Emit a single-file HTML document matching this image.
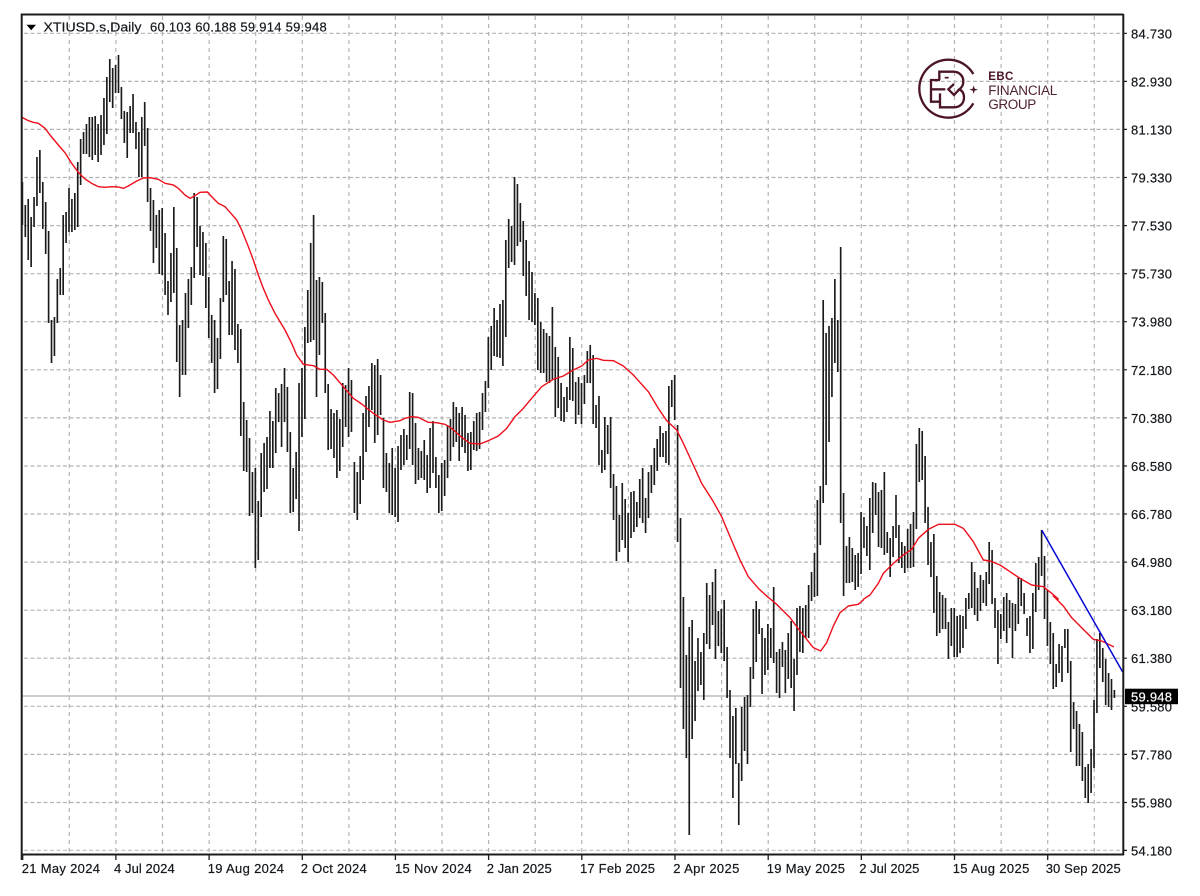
<!DOCTYPE html>
<html lang="en">
<head>
<meta charset="utf-8">
<title>XTIUSD.s,Daily</title>
<style>
html,body{margin:0;padding:0;background:#fff;width:1200px;height:896px;overflow:hidden}
svg{display:block;filter:blur(.3px)}
text{font-family:"Liberation Sans",sans-serif;font-size:13px;fill:#14181c;stroke:#14181c;stroke-width:.2px}
</style>
</head>
<body>
<svg xmlns="http://www.w3.org/2000/svg" width="1200" height="896" viewBox="0 0 1200 896">
<rect width="1200" height="896" fill="#fff"/>
<g stroke="#b4b4b4" stroke-width="1.2" stroke-dasharray="4 2.5" fill="none">
<path d="M24 33.3H1123M24 81.4H1123M24 129.4H1123M24 177.5H1123M24 225.6H1123M24 273.7H1123M24 321.7H1123M24 369.8H1123M24 417.9H1123M24 466H1123M24 514H1123M24 562.1H1123M24 610.2H1123M24 658.2H1123M24 706.3H1123M24 754.4H1123M24 802.5H1123"/>
<path d="M24 850.4H1123" stroke="#c4c4c4"/>
</g>
<g stroke="#b4b4b4" stroke-width="1.2" stroke-dasharray="4 4" fill="none">
<path d="M69.3 16V853M115.9 16V853M162.5 16V853M209.1 16V853M255.7 16V853M302.3 16V853M348.9 16V853M395.4 16V853M442 16V853M488.6 16V853M535.2 16V853M581.8 16V853M628.4 16V853M675 16V853M721.6 16V853M768.2 16V853M814.8 16V853M861.3 16V853M907.9 16V853M954.5 16V853M1001.1 16V853M1047.7 16V853M1094.3 16V853"/>
</g>
<path d="M22 696H1123" stroke="#bcbcbc" stroke-width="1.4" fill="none"/>

<g transform="translate(22.4 0) scale(2.912 1)">
<path fill="none" stroke="#1a1a1a" stroke-width="1.65" vector-effect="non-scaling-stroke" d="M0 182V225M1 205V237M2 199V260M3 217V267M4 197V227M5 157V206M6 150V193M7 182V229M8 202V254M9 231V323M10 320V363M11 317V356M12 279V323M13 268V295M14 215V295M15 212V243M16 188V232M17 199V232M18 193V230M19 162V227M20 139V185M21 132V154M22 124V154M23 117V157M24 117V160M25 116V155M26 124V162M27 115V155M28 98V145M29 77V134M30 59V102M31 68V108M32 65V93M33 55V93M34 87V119M35 111V143M36 112V158M37 106V133M38 94V133M39 122V149M40 132V177M41 117V177M42 102V146M43 128V202M44 188V231M45 200V263M46 215V248M47 210V274M48 208V275M49 233V295M50 281V315M51 253V302M52 207V293M53 248V362M54 325V397M55 320V375M56 293V375M57 279V328M58 267V305M59 193V278M60 197V247M61 226V275M62 232V276M63 243V308M64 277V338M65 315V363M66 320V393M67 338V389M68 298V359M69 236V302M70 239V295M71 281V335M72 261V335M73 269V350M74 324V363M75 329V436M76 402V471M77 420V472M78 438V516M79 472V513M80 468V568M81 501V560M82 453V517M83 443V492M84 437V489M85 411V468M86 421V468M87 388V453M88 393V422M89 384V447M90 368V422M91 387V452M92 432V513M93 468V512M94 452V499M95 383V531M96 368V437M97 327V419M98 290V343M99 243V342M100 215V340M101 280V397M102 277V355M103 282V323M104 313V393M105 384V450M106 409V449M107 413V458M108 410V478M109 419V471M110 383V447M111 385V427M112 368V437M113 380V432M114 462V513M115 472V520M116 456V504M117 413V480M118 396V452M119 386V427M120 363V410M121 365V443M122 359V435M123 375V415M124 418V488M125 453V492M126 463V513M127 448V515M128 468V517M129 446V522M130 435V470M131 429V465M132 435V460M133 392V449M134 393V465M135 423V484M136 448V480M137 451V478M138 440V480M139 455V493M140 428V488M141 421V473M142 457V488M143 475V513M144 463V511M145 460V496M146 425V478M147 419V461M148 402V447M149 407V442M150 413V461M151 407V447M152 415V453M153 433V471M154 432V470M155 421V450M156 413V451M157 412V449M158 393V430M159 381V412M160 337V388M161 326V370M162 308V356M163 320V357M164 304V358M165 300V366M166 240V337M167 219V268M168 226V262M169 177V265M170 184V246M171 203V242M172 221V276M173 240V296M174 261V320M175 272V322M176 293V325M177 298V370M178 322V373M179 329V373M180 333V382M181 336V383M182 307V380M183 347V417M184 357V408M185 383V421M186 397V422M187 387V412M188 337V400M189 348V401M190 382V424M191 377V415M192 383V424M193 375V404M194 351V383M195 345V383M196 355V424M197 405V428M198 396V465M199 450V473M200 417V470M201 425V454M202 417V488M203 474V520M204 486V561M205 515V552M206 483V540M207 499V548M208 513V562M209 492V538M210 491V532M211 502V527M212 479V518M213 468V523M214 498V533M215 472V518M216 465V493M217 448V485M218 439V471M219 426V457M220 433V457M221 431V463M222 386V465M223 380V407M224 375V420M225 425V542M226 518V688M227 597V729M228 655V758M229 627V835M230 620V739M231 661V721M232 638V691M233 652V685M234 633V700M235 583V644M236 595V649M237 582V625M238 569V659M239 611V646M240 609V653M241 600V661M242 647V698M243 690V758M244 716V798M245 708V764M246 763V825M247 707V781M248 697V751M249 695V764M250 667V707M251 609V679M252 601V662M253 609V634M254 628V694M255 638V675M256 624V670M257 628V658M258 587V663M259 652V693M260 649V698M261 642V667M262 650V693M263 633V679M264 621V688M265 659V711M266 608V675M267 606V652M268 608V653M269 605V638M270 585V638M271 572V601M272 553V597M273 500V596M274 486V545M275 300V503M276 333V485M277 326V442M278 318V397M279 279V363M280 320V372M281 247V523M282 493V596M283 546V583M284 537V583M285 548V582M286 555V590M287 553V587M288 512V574M289 517V548M290 526V556M291 498V570M292 482V533M293 483V515M294 492V547M295 490V548M296 472V555M297 532V553M298 538V577M299 526V557M300 495V538M301 525V563M302 542V568M303 546V573M304 529V568M305 524V568M306 512V567M307 444V529M308 428V482M309 431V480M310 456V523M311 507V565M312 542V577M313 534V613M314 576V636M315 592V633M316 595V629M317 598V629M318 622V659M319 608V646M320 608V657M321 616V657M322 615V653M323 616V648M324 598V629M325 593V609M326 562V608M327 572V615M328 588V621M329 575V611M330 580V603M331 572V606M332 542V584M333 550V604M334 598V628M335 610V664M336 614V639M337 597V631M338 593V643M339 600V628M340 603V658M341 604V631M342 577V624M343 578V606M344 593V614M345 618V636M346 616V653M347 593V649M348 563V612M349 557V590M350 530V576M351 556V619M352 590V646M353 622V664M354 633V689M355 664V687M356 644V673M357 646V682M358 629V648M359 629V673M360 661V752M361 702V729M362 711V766M363 724V766M364 732V781M365 767V798M366 764V803M367 749V793M368 700V768M369 639V713M370 633V668M371 648V682M372 659V705M373 673V707M374 679V710M375 690V698"/>
</g>

<g fill="none" stroke="#ee0f1c" stroke-width="1.4" stroke-linejoin="round" stroke-linecap="round">
<g transform="scale(.33333)"><polyline vector-effect="non-scaling-stroke" points="66,352 85,362 100,367 115,370 135,385 150,405 175,435 195,458 215,490 235,517 255,537 275,550 295,560 315,562 335,560 355,561 370,565 385,558 410,543 430,534 450,533 475,538 495,550 520,555 535,565 555,585 570,595 585,587 600,577 622,576 640,595 655,610 675,620 690,637 710,660 725,690 745,740 760,780 775,825 790,865 805,900"/></g>
<g transform="translate(0 300) scale(.33333)"><polyline vector-effect="non-scaling-stroke" points="805,0 825,40 855,90 875,130 890,165 910,193 940,197 960,208 980,208 1000,225 1030,260 1060,295 1085,312 1120,340 1150,360 1170,367 1200,362"/></g>
<g transform="translate(400 300) scale(.33333)"><polyline vector-effect="non-scaling-stroke" points="0,362 15,355 35,350 55,352 85,367 110,368 135,373 155,385 185,412 210,430 240,432 265,422 295,408 320,385 345,350 370,325 395,295 425,260 460,238 490,228 520,210 545,198 565,180 590,175 610,181 640,182 670,198 700,225 745,275 775,325 800,362 830,390 850,430 880,495 905,550 940,605 965,650 990,710 1020,780 1045,830 1075,865 1100,888"/></g>
<g transform="translate(400 596) scale(.33333)"><polyline vector-effect="non-scaling-stroke" points="1100,0 1130,25 1170,65 1200,105"/></g>
<g transform="translate(800 596) scale(.33333)"><polyline vector-effect="non-scaling-stroke" points="0,105 20,130 40,155 62,165 80,140 100,90 120,50 145,30 175,25 190,12"/></g>
<g transform="translate(800 300) scale(.33333)"><polyline vector-effect="non-scaling-stroke" points="190,898 210,885 235,850 250,820 280,790 310,765 335,748 355,715 385,688 415,673 465,673 490,685 520,725 550,780 570,783 600,795 630,815 660,835 695,855 730,860 755,880 775,897"/></g>
<g transform="translate(800 596) scale(.33333)"><polyline vector-effect="non-scaling-stroke" points="760,0 790,30 815,65 850,100 880,130 905,135 940,152"/></g>
</g>
<path d="M1041.7 530L1122.7 672" stroke="#0508d8" stroke-width="1.5" fill="none"/>

<path d="M21.7 14V860M20.7 14.5H1123.5M1123.3 14V855M21 854.5H1124" stroke="#1c1c1c" stroke-width="2" fill="none"/>
<path d="M1123 33.3h4M1123 81.4h4M1123 129.4h4M1123 177.5h4M1123 225.6h4M1123 273.7h4M1123 321.7h4M1123 369.8h4M1123 417.9h4M1123 466h4M1123 514h4M1123 562.1h4M1123 610.2h4M1123 658.2h4M1123 706.3h4M1123 754.4h4M1123 802.5h4M1123 850.4h4" stroke="#1c1c1c" stroke-width="1.2" fill="none"/>
<path d="M22.7 855v5M115.9 855v5M209.1 855v5M302.3 855v5M395.4 855v5M488.6 855v5M581.8 855v5M675 855v5M768.2 855v5M861.3 855v5M954.5 855v5M1047.7 855v5" stroke="#1c1c1c" stroke-width="1.3" fill="none"/>

<polygon points="26.5,24.7 36,24.7 31.2,30.2" fill="#000"/>
<text x="43.5" y="31.3" textLength="98" lengthAdjust="spacingAndGlyphs">XTIUSD.s,Daily</text>
<text x="150" y="31.3" textLength="176.7" lengthAdjust="spacing">60.103 60.188 59.914 59.948</text>

<g>
<text x="1131" y="38.3" textLength="41">84.730</text>
<text x="1131" y="86.4" textLength="41">82.930</text>
<text x="1131" y="134.4" textLength="41">81.130</text>
<text x="1131" y="182.5" textLength="41">79.330</text>
<text x="1131" y="230.6" textLength="41">77.530</text>
<text x="1131" y="278.7" textLength="41">75.730</text>
<text x="1131" y="326.7" textLength="41">73.980</text>
<text x="1131" y="374.8" textLength="41">72.180</text>
<text x="1131" y="422.9" textLength="41">70.380</text>
<text x="1131" y="471" textLength="41">68.580</text>
<text x="1131" y="519" textLength="41">66.780</text>
<text x="1131" y="567.1" textLength="41">64.980</text>
<text x="1131" y="615.2" textLength="41">63.180</text>
<text x="1131" y="663.2" textLength="41">61.380</text>
<text x="1131" y="711.3" textLength="41">59.580</text>
<text x="1131" y="759.4" textLength="41">57.780</text>
<text x="1131" y="807.5" textLength="41">55.980</text>
<text x="1131" y="855.4" textLength="41">54.180</text>
</g>
<rect x="1125" y="688.7" width="53" height="15.5" fill="#000"/>
<text x="1131" y="701.3" textLength="41" style="fill:#fff;stroke:#fff">59.948</text>

<g>
<text x="21.7" y="873.2" textLength="78.3">21 May 2024</text>
<text x="114" y="873.2" textLength="60.7">4 Jul 2024</text>
<text x="207.7" y="873.2" textLength="76.3">19 Aug 2024</text>
<text x="300.7" y="873.2" textLength="66">2 Oct 2024</text>
<text x="395" y="873.2" textLength="76.7">15 Nov 2024</text>
<text x="486.7" y="873.2" textLength="65">2 Jan 2025</text>
<text x="580" y="873.2" textLength="75">17 Feb 2025</text>
<text x="673.3" y="873.2" textLength="66">2 Apr 2025</text>
<text x="766.7" y="873.2" textLength="78.3">19 May 2025</text>
<text x="859.3" y="873.2" textLength="60">2 Jul 2025</text>
<text x="952.7" y="873.2" textLength="76.6">15 Aug 2025</text>
<text x="1045.7" y="873.2" textLength="75">30 Sep 2025</text>
</g>

<g transform="translate(800 0) scale(.33333)" fill="none" stroke="#4a1526" stroke-width="7" stroke-linejoin="miter">
<path d="M520 222A87 87 0 1 0 520 310" />
<path d="M420 240H393V305H422"/>
<path d="M393 268H436"/>
<path d="M420 280V322H462C482 322 492 308 492 292C492 280 486 272 478 268C486 262 490 252 490 244C490 228 478 215 460 215H418V240"/>
<path d="M462 252L445 268L462 285L478 268"/>
<path d="M434 233H446" stroke-width="5"/>
<polygon points="521,256 524,266 534,269 524,272 521,282 518,272 508,269 518,266" fill="#4a1526" stroke="none"/>
</g>
<text x="988.3" y="80" textLength="25" style="font-size:11.5px;font-weight:bold;fill:#4a1526;stroke:none">EBC</text>
<text x="988.3" y="95" textLength="69" style="font-size:13.5px;fill:#4f2231;stroke:none">FINANCIAL</text>
<text x="988.3" y="108.8" textLength="48" style="font-size:13.5px;fill:#4f2231;stroke:none">GROUP</text>
</svg>
</body>
</html>
